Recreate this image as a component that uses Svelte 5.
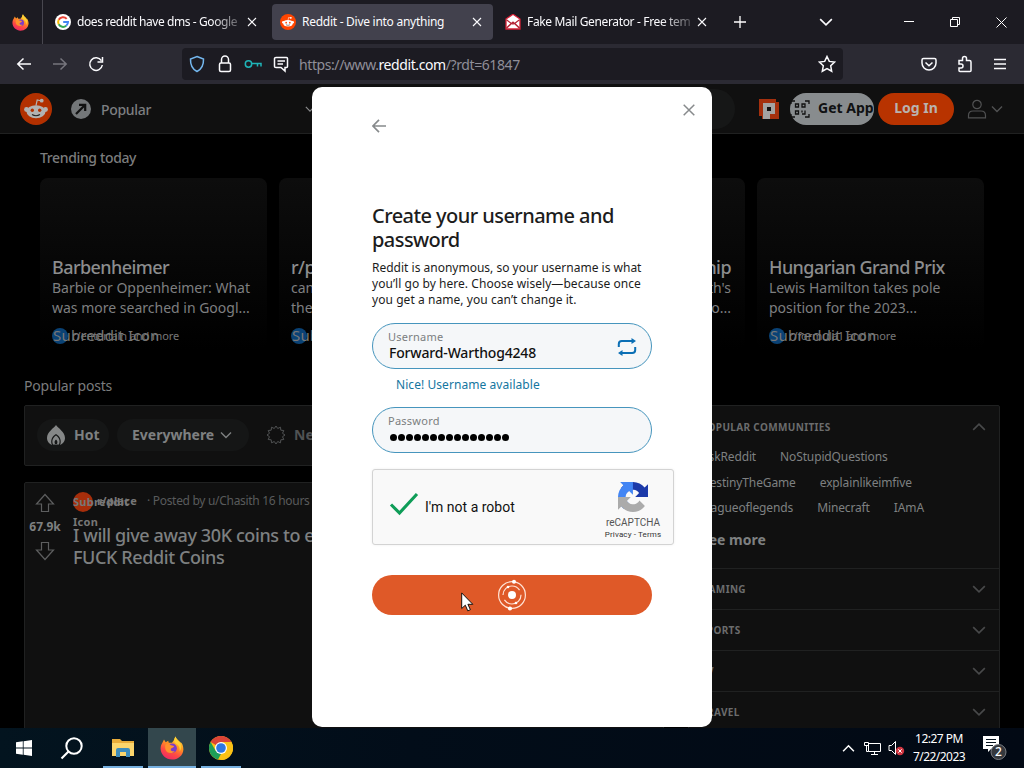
<script>
  const cards = [
    { title: 'Barbenheimer', lines: ['Barbie or Oppenheimer: What', 'was more searched in Googl...'], sub: 'r/entertain and more' },
    { title: 'r/place', lines: ['can you find it on', 'the canvas this year...'], sub: 'r/place and more' },
    { title: 'Open Championship', lines: ["final round of golf's fourth's", 'major of the year to...'], sub: 'r/golf and more', end: true },
    { title: 'Hungarian Grand Prix', lines: ['Lewis Hamilton takes pole', 'position for the 2023...'], sub: 'r/formula1 and more' }
  ];
  const communities = [
    ['AskReddit', 'NoStupidQuestions'],
    ['DestinyTheGame', 'explainlikeimfive'],
    ['leagueoflegends', 'Minecraft', 'IAmA']
  ];
  const topics = ['GAMING', 'SPORTS', 'TV', 'TRAVEL'];
  const dots = Array.from({ length: 15 });
</script>

{#snippet firefox(size)}
  <svg width={size} height={size} viewBox="0 0 24 24">
    <defs>
      <linearGradient id="fx" x1=".8" y1="0" x2=".3" y2="1">
        <stop offset="0" stop-color="#ffe43d" /><stop offset=".4" stop-color="#ff9422" />
        <stop offset=".7" stop-color="#ff4a43" /><stop offset="1" stop-color="#ef2865" />
      </linearGradient>
    </defs>
    <path fill="url(#fx)" d="M2.500 6.500 4 3.500l1.700 2.700 2.500-1.500.6 2 3.200.1 2-2.800L15.500.5c.5 2.700 3.600 4 5.100 6.100 1.400-.2 2.900 3.900 2.800 6.800C23 19.500 18 23.500 12 23.500S.8 19 .6 12.800c0-2.600.7-4.500 1.900-6.300z" />
    <circle cx="12.300" cy="12.200" r="4.600" fill="#7b3bc9" />
    <path fill="#ff922c" d="M5.500 8.500c1.500-.9 4-.3 5.600.8 1.500.7 2.700.1 3 1.300-.7 1.400-2.600 1.200-3.300 2.300-.6 1.600 1.900 3 4 2.100-2.300 3.400-8.300 2.500-9.400-1.800-.3-1.500-.4-3.300.1-4.700z" />
    <path fill="#ffcf34" d="M15.500.5c.5 2.700 3.500 4.100 4.900 6.900 1.300 2.500 1 5.500-.7 8 .4-3.700-.7-6.300-3.600-7.700-2.500-1.300-2.300-4.800-.6-7.200z" />
  </svg>
{/snippet}

{#snippet snoo(size)}
  <svg width={size} height={size} viewBox="0 0 32 32">
    <circle cx="16" cy="16" r="16" fill="#ff4500" />
    <g fill="#fff"><circle cx="6.500" cy="16.500" r="2.400" /><circle cx="25.500" cy="16.500" r="2.400" />
      <ellipse cx="16" cy="18.700" rx="9.500" ry="6.500" /><circle cx="21.700" cy="7.700" r="1.900" /></g>
    <path d="M16 12.500 17.200 7l4.500 1" fill="none" stroke="#fff" stroke-width="1.200" />
    <circle cx="12.300" cy="17.300" r="1.700" fill="#ff4500" /><circle cx="19.700" cy="17.300" r="1.700" fill="#ff4500" />
    <path d="M12 21.500q4 2.500 8 0" fill="none" stroke="#333" stroke-width="1.100" />
  </svg>
{/snippet}

{#snippet close()}
  <svg width="10" height="10" viewBox="0 0 10 10"><path d="m1 1 8 8M9 1 1 9" fill="none" stroke="currentColor" stroke-width="1.100" /></svg>
{/snippet}

{#snippet chev(w, up)}
  <svg width={w} height={w} viewBox="0 0 12 12"><path d={up ? 'm1 8.500 5-5 5 5' : 'm1 3.500 5 5 5-5'} fill="none" stroke="currentColor" stroke-width="1.400" /></svg>
{/snippet}

<div class="screen">
  <div class="tabs">
    <div class="pinned">{@render firefox(17)}</div>
    <div class="tab first">
      <svg width="16" height="16" viewBox="0 0 16 16"><circle cx="8" cy="8" r="8" fill="#fff" />
        <g fill="none" stroke-width="2"><path d="M11.700 4.800A4.900 4.900 0 0 0 3.700 5.800" stroke="#ea4335" /><path d="M3.700 5.800a4.900 4.900 0 0 0 0 4.500" stroke="#fbbc05" /><path d="M3.700 10.300a4.900 4.900 0 0 0 7.500 1.400" stroke="#34a853" /><path d="M11.200 11.700A4.900 4.900 0 0 0 13 8H8.200" stroke="#4285f4" /></g></svg>
      <span class="tabtext fade t1">does reddit have dms - Google</span>
      {@render close()}
    </div>
    <div class="tab active">
      {@render snoo(16)}
      <span class="tabtext t2">Reddit - Dive into anything</span>
      {@render close()}
    </div>
    <div class="tab third">
      <svg width="16" height="16" viewBox="0 0 16 16"><path d="M1 5 8 .3 15 5v10H1z" fill="#fff" stroke="#d51f35" stroke-width="1.300" /><path d="m1.500 5.800 4.700 3.500L1.500 14M14.500 5.800 9.800 9.300l4.700 4.700M1.500 14.300 8 8l6.500 6.300M4.500 8.200 8 10l3.500-1.800" fill="none" stroke="#b42334" stroke-width="1.200" /></svg>
      <span class="tabtext fade t3">Fake Mail Generator - Free temp</span>
      {@render close()}
    </div>
    <svg class="plus" width="12" height="12" viewBox="0 0 12 12"><path d="M6 0v12M0 6h12" stroke="#fff" stroke-width="1.300" /></svg>
    <div class="alltabs">{@render chev(14, false)}</div>
    <div class="winbtns">
      <svg width="10" height="10" viewBox="0 0 10 10"><path d="M0 4.500h10" stroke="#fff" /></svg>
      <svg width="10" height="10" viewBox="0 0 10 10"><path d="M.5 2.500h7v7h-7zM2.500 2.500v-2h7v7h-2" fill="none" stroke="#fff" /></svg>
      <svg width="11" height="11" viewBox="0 0 11 11"><path d="m.5.5 10 10m0-10-10 10" stroke="#fff" /></svg>
    </div>
  </div>

  <div class="toolbar">
    <div class="nav">
      <svg width="16" height="16" viewBox="0 0 16 16"><path d="M15 8H1.500M7.500 2.500 1.800 8l5.700 5.500" /></svg>
      <svg class="dim" width="16" height="16" viewBox="0 0 16 16"><path d="M1 8h13.500M8.500 2.500 14.200 8l-5.700 5.500" /></svg>
      <svg width="16" height="16" viewBox="0 0 16 16"><path d="M13.400 4.700A6.300 6.300 0 1 0 14.300 9M14.500 1v5h-5" /></svg>
    </div>
    <div class="urlbar">
      <svg width="16" height="18" viewBox="0 0 16 18" class="shield"><path d="M8 1.500 14.500 4c.2 5-1.500 10-6.500 12.500C3 14 1.300 9 1.500 4z" /></svg>
      <svg width="16" height="18" viewBox="0 0 16 18"><rect x="2.500" y="8" width="11" height="8.500" rx="1.500" /><path d="M4.500 8V4.500a3.500 3.500 0 0 1 7 0V8" /></svg>
      <svg width="18" height="16" viewBox="0 0 18 16" class="key"><circle cx="4.500" cy="8" r="3.200" /><path d="M7.700 7.500H17v3M13.500 7.500v3" /></svg>
      <svg width="16" height="18" viewBox="0 0 16 18"><path d="M3 2.500h10.500q1 0 1 1v8q0 1-1 1H12V16l-4-3.500H3q-1.500 0-1.500-1v-8q0-1 1.500-1zM4.500 6H12M4.500 9H10" /></svg>
      <span class="url">https://www.<b>reddit.com</b>/?rdt=61847</span>
      <svg class="star" width="18" height="18" viewBox="0 0 18 18"><path d="m9 1.500 2.300 4.900 5.300.7-3.900 3.700 1 5.400L9 13.600l-4.700 2.600 1-5.400L1.400 7.100l5.300-.7z" /></svg>
    </div>
    <div class="tools">
      <svg width="16" height="16" viewBox="0 0 16 16"><path d="M2.500 2.500h11q1.500 0 1.500 1.500v3a7 7 0 0 1-14 0V4q0-1.500 1.500-1.500zM4.500 6.500 8 9.700l3.500-3.200" /></svg>
      <svg width="16" height="18" viewBox="0 0 16 18"><path d="M2 5.500h3.500V3.500a2 2 0 0 1 4 0v2h3q1.500 0 1.500 1.500v8.500q0 1-1 1H3q-1 0-1-1V13h2a2 2 0 0 0 0-4H2z" /></svg>
      <svg width="14" height="14" viewBox="0 0 14 14"><path d="M1 2.500h12M1 7h12M1 11.500h12" /></svg>
    </div>
  </div>

  <div class="page">
    <header>
      <div class="logo">{@render snoo(32)}</div>
      <svg class="popicon" width="20" height="20" viewBox="0 0 20 20"><circle cx="10" cy="10" r="10" fill="#747779" /><path d="m5 15 8-8M8 5.800h6.200V12" fill="none" stroke="#111" stroke-width="2.200" /></svg>
      <span class="poptext">Popular</span>
      <span class="hchev">{@render chev(10, false)}</span>
      <div class="search"></div>
      <svg class="place" width="20" height="20" viewBox="0 0 20 20"><path d="M0 0h17v3h3v17H3v-3H0z" fill="#a4300e" /><path d="M4 4h12v11h-5v5H4z" fill="#a3a3a3" /><path d="M8 8h4v4H8z" fill="#111" /></svg>
      <div class="getapp">
        <svg width="20" height="18" viewBox="0 0 20 18"><path d="M1 4V1h4M15 1h4v3M1 14v3h4M15 17h4v-3M5.500 4h3v3h-3zM12 4h3v3h-3zM5.500 11h3v3h-3zM12 10.500v2M15 10.500v3.500h-3" fill="none" stroke="#111" stroke-width="1.300" /></svg>
        <span>Get App</span>
      </div>
      <div class="login">Log In</div>
      <svg class="user" width="20" height="20" viewBox="0 0 20 20"><circle cx="10" cy="5.500" r="4.200" /><path d="M1.500 18.800v-2.300q0-4.500 4.500-4.500h8q4.500 0 4.500 4.500v2.300z" /></svg>
      <span class="uchev">{@render chev(12, false)}</span>
    </header>

    <h2 class="trend">Trending today</h2>
    <div class="cards">
      {#each cards as c}
        <article class="card" class:end={c.end}>
          <h3>{c.title}</h3>
          {#each c.lines as l}<p>{l}</p>{/each}
          <div class="subrow"><span class="subdot"></span><span class="subalt">Subreddit Icon</span><span class="subname">{c.sub}</span></div>
        </article>
      {/each}
    </div>
    <h2 class="posts">Popular posts</h2>

    <div class="columns">
      <div class="feed">
        <div class="filters">
          <div class="pill hot"><svg width="20" height="20" viewBox="0 0 20 20"><path d="M10 0C8 3 1 7 1 13c0 3.500 2.500 6 5 7-2-4 0-9 4-11 4 2 6 7 4 11 2.500-1 5-3.500 5-7 0-6-7-10-9-13z" fill="#858787" /><path d="M10 10.500c-3 2-4.500 5-3 9h6c1.500-4 0-7-3-9zm0 4c1.500 1 1.800 3 1 4.500H9c-.8-1.500-.5-3.500 1-4.500z" fill="#858787" fill-rule="evenodd" /></svg>Hot</div>
          <div class="pill every">Everywhere{@render chev(12, false)}</div>
          <div class="pill new"><svg width="20" height="20" viewBox="0 0 20 20"><path d="m10 1 1.700 2.500 2.800-1.300.3 3 3 .3-1.300 2.800L19 10l-2.500 1.700 1.300 2.800-3 .3-.3 3-2.800-1.300L10 19l-1.700-2.500-2.800 1.300-.3-3-3-.3 1.300-2.800L1 10l2.500-1.700-1.300-2.800 3-.3.3-3 2.800 1.300z" fill="none" stroke="currentColor" /></svg>New</div>
        </div>
        <div class="post">
          <div class="votes">
            <svg width="20" height="20" viewBox="0 0 20 20"><path d="M10 1.500 18.500 11h-5v7.500h-7V11h-5z" /></svg>
            <span>67.9k</span>
            <svg width="20" height="20" viewBox="0 0 20 20"><path d="m10 18.500 8.500-9.500h-5V1.500h-7V9h-5z" /></svg>
          </div>
          <div class="body">
            <div class="meta"><span class="reddot"></span><span class="alt">Subreddit<br />Icon</span><span class="rname">r/place</span><span class="by">· Posted by u/Chasith 16 hours ago</span></div>
            <div class="ptitle">I will give away 30K coins to everyone<br />FUCK Reddit Coins</div>
          </div>
        </div>
      </div>
      <aside>
        <div class="popcom">
          <div class="shead"><span>POPULAR COMMUNITIES</span>{@render chev(14, true)}</div>
          {#each communities as row}
            <div class="crow">{#each row as c}<span>{c}</span>{/each}</div>
          {/each}
          <div class="more">See more</div>
        </div>
        {#each topics as t}
          <div class="topic"><span>{t}</span>{@render chev(14, false)}</div>
        {/each}
      </aside>
    </div>
  </div>

  <div class="taskbar">
    <div class="start"><svg width="16" height="16" viewBox="0 0 16 16"><path fill="#fff" d="M0 2.300 6.800 1.300v6.300H0zM7.600 1.200 16 0v7.600H7.600zM0 8.400h6.800v6.300L0 13.700zM7.600 8.400H16V16l-8.400-1.200z" /></svg></div>
    <div class="find"><svg width="24" height="24" viewBox="0 0 24 24"><circle cx="14" cy="10" r="7.700" fill="none" stroke="#fff" stroke-width="2" /><path d="m8.500 15.500-7 7" stroke="#fff" stroke-width="2.200" /></svg></div>
    <div class="app files"><svg width="22" height="20" viewBox="0 0 22 20"><path d="M0 1h8l2 2h12v15H0z" fill="#e8ac3a" /><path d="M0 5h22v13H0z" fill="#fbd56c" /><path d="M4 19v-7q0-2 2-2h10q2 0 2 2v7h-4v-5H8v5z" fill="#3d8cbc" /></svg></div>
    <div class="app current">{@render firefox(24)}</div>
    <div class="app chrome"><svg width="24" height="24" viewBox="0 0 24 24"><circle cx="12" cy="12" r="12" fill="#fbc116" /><path d="M12 12 1.600 6A12 12 0 0 1 22.400 6z" fill="#db4437" /><path d="M12 12v6L9 23.600A12 12 0 0 1 1.600 6l5.200 9z" fill="#1e9e58" /><path d="M12 6h10.400A12 12 0 0 1 12 24l5.200-9z" fill="#fbc116" /><circle cx="12" cy="12" r="6" fill="#fff" /><circle cx="12" cy="12" r="4.800" fill="#2f77e2" /></svg></div>
    <div class="tray">
      {@render chev(13, true)}
      <svg class="net" width="17" height="15" viewBox="0 0 17 15"><path d="M4.500 2.500h12v8h-12zM7 13.500h7M10.500 10.500v3M.5 1.500h4v3h-4zM2.500 4.500v6h2" fill="none" stroke="#fff" /></svg>
      <svg class="vol" width="18" height="16" viewBox="0 0 18 16"><path d="M1 5.500h2.500l4-4v13l-4-4H1z" fill="none" stroke="#fff" /><circle cx="12" cy="11" r="4.200" fill="#cf3540" /><path d="m10.300 9.300 3.400 3.400m0-3.400-3.400 3.400" stroke="#fff" /></svg>
      <div class="clock"><span class="time">12:27 PM</span><span class="date">7/22/2023</span></div>
      <svg class="notif" width="26" height="26" viewBox="0 0 26 26"><path d="M1 1h16v13H9l-3 3v-3H1z" fill="#fff" /><path d="M4 4.500h10M4 7.500h10M4 10.500h7" stroke="#06131e" /><circle cx="16.500" cy="17" r="7.500" fill="#35383d" stroke="#7a7d82" /><text x="16.500" y="21.300" text-anchor="middle" fill="#fff" font-size="12" font-weight="500">2</text></svg>
    </div>
  </div>

  <div class="modal">
    <div class="mclose"><svg width="12" height="12" viewBox="0 0 12 12"><path d="m.7.7 10.600 10.600M11.300.7.7 11.300" stroke="#878a8c" stroke-width="1.500" /></svg></div>
    <svg class="back" width="14" height="14" viewBox="0 0 14 14"><path d="M14 7H1.500M7 .8.900 7 7 13.200" fill="none" stroke="#878a8c" stroke-width="1.700" /></svg>
    <h1>Create your username and<br />password</h1>
    <p class="intro"><span>Reddit is anonymous, so your username is what</span><span class="l2">you’ll go by here. Choose wisely—because once</span><span class="l3">you get a name, you can’t change it.</span></p>
    <div class="field">
      <div class="fcol"><span class="label">Username</span><span class="value">Forward-Warthog4248</span></div>
      <svg width="20" height="20" viewBox="0 0 20 20"><path d="M1.800 10V7q0-3 3-3H17M18.200 10v3q0 3-3 3H3" fill="none" stroke="#0b6fb5" stroke-width="2" /><path d="m14.500 1 4.500 3-4.500 3zM5.500 13 1 16l4.500 3z" fill="#0b6fb5" /></svg>
    </div>
    <div class="ok">Nice! Username available</div>
    <div class="field">
      <div class="fcol"><span class="label pw">Password</span><span class="dots">{#each dots as _}<i></i>{/each}</span></div>
    </div>
    <div class="captcha">
      <svg class="check" width="30" height="24" viewBox="0 0 30 24"><path d="m2 12.500 8.500 8.500L28 2" fill="none" stroke="#0f9d58" stroke-width="3.100" /></svg>
      <span class="robot">I'm not a robot</span>
      <div class="rc">
        <svg width="30" height="30" viewBox="0 0 64 64"><path fill="#1c3aa9" d="M64 31.955l-.033-1.370V4.687l-7.160 7.160C50.948 4.674 42.033.093 32.050.093c-10.400 0-19.622 4.960-25.458 12.640l11.736 11.860a15.550 15.550 0 0 1 4.754-5.334c2.050-1.600 4.952-2.906 8.968-2.906.485 0 .860.057 1.135.163 4.976.393 9.288 3.140 11.828 7.124l-8.307 8.307L64 31.953" /><path fill="#4285f4" d="M31.862.094l-1.370.033H4.594l7.160 7.160C4.580 13.147 0 22.060 0 32.046c0 10.400 4.960 19.622 12.640 25.458L24.500 45.768a15.550 15.550 0 0 1-5.334-4.754c-1.600-2.050-2.906-4.952-2.906-8.968 0-.485.057-.860.163-1.135.393-4.976 3.140-9.288 7.124-11.828l8.307 8.307L31.860.095" /><path fill="#ababab" d="M.001 32.045l.033 1.370v25.898l7.160-7.160c5.860 7.173 14.774 11.754 24.760 11.754 10.400 0 19.622-4.960 25.458-12.640l-11.736-11.860a15.550 15.550 0 0 1-4.754 5.334c-2.050 1.600-4.952 2.906-8.968 2.906-.485 0-.860-.057-1.135-.163-4.976-.393-9.288-3.140-11.828-7.124l8.307-8.307c-10.522.040-22.400.066-27.295-.005" /></svg>
        <span class="rcname">reCAPTCHA</span><span class="rcterms">Privacy - Terms</span>
      </div>
    </div>
    <div class="submit">
      <svg width="30" height="32" viewBox="0 0 30 32" fill="none" stroke="#ffe3d6" stroke-width="1.200"><circle cx="15" cy="16" r="13.400" /><circle cx="15" cy="16" r="9" stroke-dasharray="23 5" /><g fill="#fff" stroke="none"><circle cx="15" cy="16" r="4" /><circle cx="17" cy="2.700" r="2" /><circle cx="13" cy="29.500" r="2.100" /><circle cx="11" cy="8" r="1.300" /><circle cx="19" cy="24" r="1.300" /></g></svg>
    </div>
  </div>
  <svg class="cursor" width="13" height="20" viewBox="0 0 13 20"><path d="M.7.900v15.600l3.600-3.300 2.500 5.700 2.600-1.200-2.500-5.400h4.900z" fill="#fff" stroke="#15100d" /></svg>
</div>

<style>
  :global(body) { background: #000; overflow: hidden; }
  .screen { width: 1024px; height: 768px; display: flex; flex-direction: column; position: relative; overflow: hidden; background: #000; font-family: "Noto Sans", "Open Sans", sans-serif; white-space: nowrap; }
  .screen * { box-sizing: border-box; }
  h1, h2, h3, p { margin: 0; font-weight: 500; }
  svg { display: block; flex: none; }

  .tabs { flex: none; height: 44px; background: #1c1b22; display: flex; align-items: center; color: #fbfbfe; }
  .pinned { width: 43px; height: 44px; padding-left: 12px; display: flex; align-items: center; border-right: 1px solid #48474f; }
  .tab { height: 36px; display: flex; align-items: center; gap: 6px; font-size: 12px; letter-spacing: -.27px; }
  .first { width: 229px; padding-left: 12px; }
  .active { width: 221px; padding-left: 8px; background: #42414d; border-radius: 4px; }
  .third { width: 240px; padding-left: 12px; }
  .tabtext { width: 164px; overflow: hidden; white-space: nowrap; line-height: 18px; }
  .t1 { letter-spacing: -.42px; }
  .t3 { letter-spacing: -.35px; }
  .active .tabtext { width: 165px; margin-right: -1px; }
  .fade { mask-image: linear-gradient(90deg, #000 82%, transparent 105%); }
  .plus { margin-left: 1px; }
  .alltabs { margin-left: 73px; }
  .winbtns { margin-left: auto; display: flex; align-items: center; gap: 36px; padding-right: 17px; }

  .toolbar { flex: none; height: 40px; background: #2b2a33; display: flex; align-items: center; }
  .toolbar svg { fill: none; stroke: #fbfbfe; stroke-width: 1.500; }
  .nav { display: flex; gap: 20px; padding-left: 16px; width: 182px; }
  .toolbar .nav .dim { stroke: #77767e; }
  .urlbar { width: 661px; height: 32px; background: #1c1b22; border-radius: 4px; display: flex; align-items: center; gap: 12px; padding: 0 7px; }
  .toolbar .urlbar .shield { stroke: #74b7ee; }
  .toolbar .urlbar .key { stroke: #1fb5b8; margin: 0 -1px; }
  .url { font-size: 14px; color: #8f8e98; margin-left: -2px; letter-spacing: -.41px; }
  .url b { font-weight: 400; color: #fbfbfe; }
  .star { margin-left: auto; }
  .tools { margin-left: auto; display: flex; gap: 20px; align-items: center; padding-right: 17px; }

  .page { flex: 1; min-height: 0; overflow: hidden; background: #000; color: #8b8c8d; }
  header { height: 50px; background: #101010; border-bottom: 1px solid #202121; display: flex; align-items: center; padding-left: 20px; }
  .logo { filter: brightness(.7); margin-right: 19px; }
  .poptext { margin-left: 10px; padding-top: 2px; width: 204px; font-size: 14px; font-weight: 500; letter-spacing: -.3px; color: #7d7f81; }
  .hchev { width: 10px; }
  .search { width: 420px; height: 40px; border-radius: 20px; background: #161717; margin-right: 24px; }
  .getapp { margin-left: 11px; width: 84px; height: 32px; border-radius: 16px; background: #888c8e; color: #101112; font-size: 14px; font-weight: 700; display: flex; align-items: center; gap: 8px; }
  .getapp span, .login { padding-bottom: 2px; }
  .login { margin-left: 4px; width: 76px; height: 32px; border-radius: 16px; background: #b83300; color: #b9b2af; font-size: 14px; font-weight: 700; display: flex; align-items: center; justify-content: center; }
  .user { margin-left: 13px; fill: none; stroke: #505152; stroke-width: 1.200; }
  .uchev { margin-left: 4px; color: #505152; }

  h2 { font-size: 14px; line-height: 18px; color: #7b7c7d; letter-spacing: -.36px; }
  .trend { padding: 15px 0 0 40px; }
  .cards { display: flex; gap: 12px; padding: 11px 0 0 40px; }
  .card { width: 227px; height: 172px; flex: none; border-radius: 8px; background: linear-gradient(#0d0d0d, #000); padding: 78px 12px 0; }
  .card.end { text-align: right; padding-right: 14px; }
  h3 { font-size: 18px; line-height: 22px; letter-spacing: -.57px; color: #8c8d8e; }
  .card p { font-size: 14px; line-height: 20px; font-weight: 400; color: #7e7f80; }
  .subrow { position: relative; height: 20px; margin-top: 7px; color: #777; text-align: left; }
  .subdot { position: absolute; left: 0; top: 3px; width: 16px; height: 16px; border-radius: 50%; background: #0a4275; }
  .subalt { position: absolute; left: 1px; top: 0; font-size: 15px; line-height: 20px; letter-spacing: .22px; }
  .subname { position: absolute; left: 20px; top: 2px; font-size: 11px; line-height: 18px; letter-spacing: -.1px; }
  .posts { padding: 27px 0 0 24px; font-weight: 400; letter-spacing: -.2px; }

  .columns { display: flex; gap: 24px; padding: 10px 24px 0; }
  .feed { width: 640px; }
  .filters { height: 61px; border: 1px solid #202121; background: #101010; border-radius: 2px; display: flex; align-items: center; padding: 0 0 2px 12px; }
  .pill { height: 32px; border-radius: 16px; background: #151616; display: flex; align-items: center; gap: 8px; font-size: 14px; font-weight: 700; color: #7e8081; }
  .hot { padding: 0 9px; width: 72px; margin-right: 8px; }
  .every { padding: 0 12px 0 15px; gap: 6px; width: 132px; }
  .new { background: none; padding-left: 17px; color: #505253; }
  .post { height: 300px; margin-top: 16px; border: 1px solid #202121; background: #101010; border-radius: 2px; display: flex; }
  .votes { width: 40px; padding-top: 10px; display: flex; flex-direction: column; align-items: center; gap: 6px; font-size: 12px; line-height: 16px; font-weight: 700; color: #7e8081; }
  .votes svg { fill: none; stroke: #5d5e5f; stroke-width: 1.200; }
  .body { padding: 9px 0 0 8px; }
  .meta { position: relative; height: 33px; font-size: 12px; line-height: 20px; }
  .reddot { position: absolute; left: 0; top: 0; width: 20px; height: 20px; border-radius: 50%; background: #a62e0b; }
  .alt { position: absolute; left: 0; top: 0; font-weight: 700; font-size: 11px; letter-spacing: .3px; color: #777; }
  .rname { position: absolute; left: 24px; top: -1px; font-weight: 700; font-size: 11px; letter-spacing: .2px; color: #777; }
  .by { position: absolute; left: 74px; top: -1px; color: #595b5c; letter-spacing: -.3px; }
  .ptitle { font-size: 18px; line-height: 22px; font-weight: 500; color: #7e8081; letter-spacing: -.4px; margin-top: -1px; }

  aside { width: 312px; height: 400px; border: 1px solid #202121; background: #101010; border-radius: 2px; }
  .popcom { height: 162px; }
  .shead { height: 37px; padding: 4px 13px 0 12px; display: flex; align-items: center; justify-content: space-between; font-size: 10px; font-weight: 700; letter-spacing: .35px; color: #6b6c6d; }
  .crow { height: 26px; padding-left: 12px; display: flex; align-items: center; gap: 24px; font-size: 12px; color: #7e8081; letter-spacing: -.13px; }
  .crow:nth-child(4) { height: 24px; }
  .more { margin-top: 11px; padding-left: 12px; font-size: 14px; line-height: 20px; font-weight: 700; color: #7e8081; }
  .topic { height: 41px; border-top: 1px solid #202121; padding: 0 13px 0 12px; display: flex; align-items: center; justify-content: space-between; font-size: 10px; font-weight: 700; letter-spacing: .35px; color: #6b6c6d; }
  aside svg { color: #48494a; }

  .taskbar { flex: none; height: 40px; background: linear-gradient(90deg, #03141f, #020d19 40%, #020914); display: flex; align-items: center; color: #fff; }
  .start { width: 48px; display: flex; justify-content: center; }
  .find { width: 48px; display: flex; justify-content: center; }
  .app { height: 40px; display: flex; align-items: center; justify-content: center; border-bottom: 2px solid #76b0e0; padding-top: 2px; }
  .files { width: 40px; margin-left: 7px; margin-right: 5px; }
  .current { width: 48px; background: #33474d; }
  .chrome { width: 40px; margin-left: 5px; }
  .tray { margin-left: auto; display: flex; align-items: center; padding-right: 16px; }
  .net { margin-left: 9px; }
  .vol { margin-left: 7px; }
  .clock { width: 56px; margin: -1px 15px 0 5px; display: flex; flex-direction: column; align-items: center; font-size: 12px; line-height: 18px; letter-spacing: -.5px; }
  .date { letter-spacing: -.55px; }

  .modal { position: absolute; left: 312px; top: 87px; width: 400px; height: 640px; background: #fff; border-radius: 10px; padding: 17px 0 0 60px; color: #1c1c1c; }
  .mclose { display: flex; justify-content: flex-end; padding-right: 17px; }
  .back { margin-top: 3px; }
  h1 { margin-top: 71px; font-size: 20px; line-height: 24px; letter-spacing: -.56px; }
  .intro { margin-top: 8px; font-size: 12px; line-height: 16px; font-weight: 400; display: flex; flex-direction: column; align-items: flex-start; }
  .l2 { letter-spacing: .05px; }
  .l3 { letter-spacing: .06px; }
  .field { margin-top: 15px; width: 280px; height: 46px; border: 1px solid #4695bd; border-radius: 23px; background: #f5f7f9; padding: 0 14px 0 15px; display: flex; align-items: center; justify-content: space-between; }
  .field svg { margin-top: 2px; }
  .fcol { display: flex; flex-direction: column; margin-top: -3px; }
  .label { font-size: 11px; line-height: 14px; color: #7b7e80; margin-top: 2px; letter-spacing: .25px; }
  .value { font-size: 14px; line-height: 18px; font-weight: 500; color: #111; padding-left: 1px; letter-spacing: -.17px; }
  .dots { display: flex; gap: 1px; padding: 6px 0 5px 2px; }
  .dots i { width: 7px; height: 7px; border-radius: 50%; background: #000; }
  .ok { margin-top: 8px; padding-left: 24px; font-size: 12px; line-height: 16px; color: #14769f; letter-spacing: .06px; }
  .ok + .field { margin-top: 14px; }
  .captcha { margin-top: 16px; width: 302px; height: 76px; border: 1px solid #d3d3d3; border-radius: 3px; background: #f9f9f9; box-shadow: 0 0 3px #0001; display: flex; align-items: center; padding-left: 16px; font-family: Roboto, sans-serif; color: #111; }
  .check { margin-top: -6px; }
  .robot { margin-left: 6px; font-size: 14px; }
  .rc { margin-left: auto; width: 80px; display: flex; flex-direction: column; align-items: center; color: #555; padding-top: 7px; }
  .rcname { margin-top: 4px; font-size: 10px; line-height: 14px; }
  .rcterms { font-size: 8px; line-height: 10px; color: #333; letter-spacing: .13px; }
  .submit { margin-top: 30px; width: 280px; height: 40px; border-radius: 20px; background: #df5928; display: flex; align-items: center; justify-content: center; }
  .cursor { position: absolute; left: 461px; top: 592px; }
</style>
